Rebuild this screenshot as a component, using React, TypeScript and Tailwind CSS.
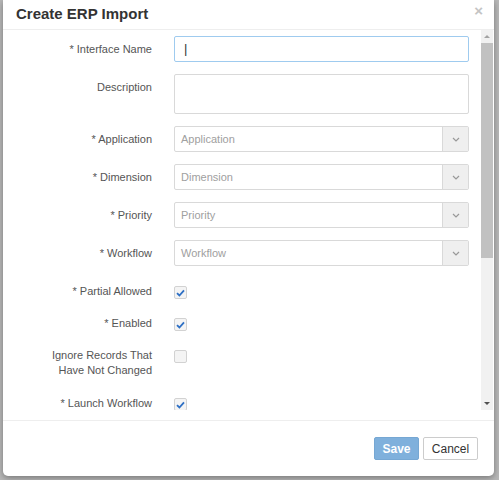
import React from 'react';

const FONT = { fontFamily: '"Liberation Sans", Arial, sans-serif' };

function Chevron() {
  return (
    <svg width="8" height="5" viewBox="0 0 8 5" fill="none">
      <path d="M1 1l3 3 3-3" stroke="#999" strokeWidth="1.2" />
    </svg>
  );
}

function Check() {
  return (
    <svg width="9" height="8" viewBox="0 0 9 8" fill="none">
      <path d="M1 4.2l2.4 2.3L8 1.3" stroke="#2d6fc4" strokeWidth="1.8" />
    </svg>
  );
}

function SelectRow({ label, placeholder }: { label: string; placeholder: string }) {
  return (
    <div className="flex items-center mt-[12px]">
      <div className="w-[149px] text-right text-[#555]">{label}</div>
      <div className="ml-[22px] w-[295px] h-[26px] flex border border-[#d9d9d9] rounded-[2px] bg-white">
        <div className="flex-1 flex items-center pl-[6px] text-[#a0a0a0]">{placeholder}</div>
        <div className="w-[26px] flex items-center justify-center bg-[#efefef] border-l border-[#d9d9d9]">
          <Chevron />
        </div>
      </div>
    </div>
  );
}

function CheckRow({ label, checked, className }: { label: React.ReactNode; checked: boolean; className: string }) {
  return (
    <div className={`flex items-start ${className}`}>
      <div className="w-[149px] text-right text-[#555] leading-[15px]">{label}</div>
      <div className="ml-[22px] mt-[2px] w-[13px] h-[13px] flex items-center justify-center border border-[#d2d2d2] rounded-[2px] bg-[#f4f4f4]">
        {checked && <Check />}
      </div>
    </div>
  );
}

export default function App() {
  return (
    <div className="w-[499px] h-[480px] bg-[#b8b8b8] overflow-hidden text-[11px]" style={FONT}>
      <div className="ml-[3px] w-[491px] h-[476px] bg-white rounded-b-[5px] shadow-[0_2px_6px_rgba(0,0,0,0.35)] flex flex-col">
        {/* Header */}
        <div className="h-[30px] border-b border-[#eeeeee] flex items-center justify-between pl-[13px] pr-[11px] shrink-0">
          <h1 className="text-[15px] font-bold text-[#333]">Create ERP Import</h1>
          <span className="text-[#c4c4c4] text-[15px] font-bold leading-none -mt-[8px]">×</span>
        </div>

        {/* Body */}
        <div className="flex h-[380px] shrink-0">
          <div className="flex-1 overflow-hidden pt-[6px]">
            <div className="flex items-center">
              <div className="w-[149px] text-right text-[#555]">* Interface Name</div>
              <div className="ml-[22px] w-[295px] h-[26px] flex items-center border border-[#9fcbef] rounded-[2px] pl-[9px] text-[#333] text-[13px]">
                |
              </div>
            </div>
            <div className="flex items-start mt-[12px]">
              <div className="w-[149px] text-right text-[#555] pt-[5px]">Description</div>
              <div className="ml-[22px] w-[295px] h-[40px] border border-[#d9d9d9] rounded-[2px]" />
            </div>
            <div className="mt-[2px]">
              <SelectRow label="* Application" placeholder="Application" />
            </div>
            <SelectRow label="* Dimension" placeholder="Dimension" />
            <SelectRow label="* Priority" placeholder="Priority" />
            <SelectRow label="* Workflow" placeholder="Workflow" />

            <CheckRow label="* Partial Allowed" checked className="mt-[18px]" />
            <CheckRow label="* Enabled" checked className="mt-[17px]" />
            <CheckRow
              label={
                <>
                  Ignore Records That
                  <br />
                  Have Not Changed
                </>
              }
              checked={false}
              className="mt-[17px]"
            />
            <CheckRow label="* Launch Workflow" checked className="mt-[18px]" />
          </div>

          {/* Scrollbar */}
          <div className="w-[12px] mr-[1px] bg-[#f1f1f1] flex flex-col items-center">
            <div className="h-[13px] flex items-center justify-center">
              <div className="w-0 h-0 border-l-[3px] border-r-[3px] border-b-[3px] border-l-transparent border-r-transparent border-b-[#a3a3a3]" />
            </div>
            <div className="w-full h-[215px] bg-[#c1c1c1]" />
            <div className="flex-1" />
            <div className="h-[13px] flex items-center justify-center">
              <div className="w-0 h-0 border-l-[3px] border-r-[3px] border-t-[3px] border-l-transparent border-r-transparent border-t-[#505050]" />
            </div>
          </div>
        </div>

        {/* Footer */}
        <div className="mt-[10px] border-t border-[#eeeeee] flex justify-end gap-[4px] pt-[16px] pr-[16px]">
          <button className="h-[23px] w-[45px] rounded-[2px] bg-[#7fb0dc] border border-[#76a7d3] text-white text-[12px] font-bold">
            Save
          </button>
          <button className="h-[23px] w-[55px] rounded-[2px] bg-white border border-[#cccccc] text-[#333] text-[12px]">
            Cancel
          </button>
        </div>
      </div>
    </div>
  );
}
